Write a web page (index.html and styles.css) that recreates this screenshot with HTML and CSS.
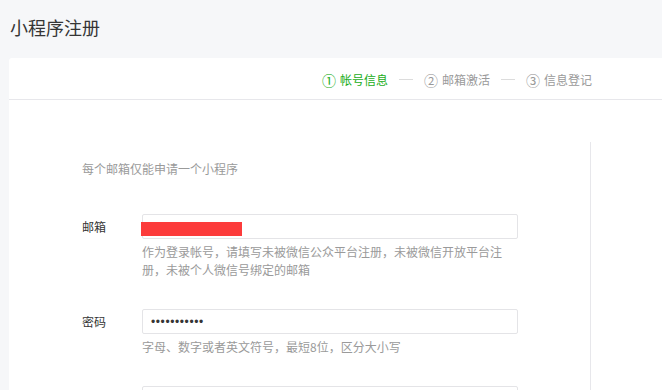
FILE: index.html
```html
<!DOCTYPE html>
<html lang="zh-CN">
<head>
<meta charset="utf-8">
<title>小程序注册</title>
<link rel="stylesheet" href="styles.css">
</head>
<body>
<div class="page">
  <h1 class="page-title">小程序注册</h1>
  <div class="card">
    <div class="card-head">
      <div class="steps">
        <div class="step active"><span class="num">①</span><span>帐号信息</span></div>
        <div class="sep"></div>
        <div class="step"><span class="num">②</span><span>邮箱激活</span></div>
        <div class="sep"></div>
        <div class="step"><span class="num">③</span><span>信息登记</span></div>
      </div>
    </div>
    <div class="card-body">
      <div class="form-col">
        <p class="tips">每个邮箱仅能申请一个小程序</p>
        <div class="form-group">
          <div class="field">
            <label class="label">邮箱</label>
            <div class="input-wrap">
              <div class="input"></div>
              <div class="redact"></div>
            </div>
          </div>
          <p class="help">作为登录帐号，请填写未被微信公众平台注册，未被微信开放平台注册，未被个人微信号绑定的邮箱</p>
        </div>
        <div class="form-group">
          <div class="field">
            <label class="label">密码</label>
            <div class="input-wrap">
              <div class="input"><span class="dots">•••••••••••</span></div>
            </div>
          </div>
          <p class="help">字母、数字或者英文符号，最短8位，区分大小写</p>
        </div>
        <div class="form-group">
          <div class="field">
            <span class="label"></span>
            <div class="input-wrap">
              <div class="input"></div>
            </div>
          </div>
        </div>
      </div>
    </div>
  </div>
</div>
</body>
</html>
```

FILE: styles.css
```css
html, body {
  margin: 0;
  padding: 0;
  background: #f6f7f9;
  overflow: hidden;
  height: 390px;
}
body {
  font-family: "Noto Sans CJK SC", "Noto Sans", sans-serif;
  color: #353535;
}
.page {
  padding: 16px 0 0 0;
}
.page-title {
  margin: 0 0 20px 10px;
  font-size: 18px;
  line-height: 22px;
  font-weight: normal;
  color: #353535;
}
.card {
  margin-left: 9px;
  width: 700px;
  height: 400px;
  background: #fff;
  border-radius: 3px 0 0 0;
}
.card-head {
  height: 41px;
  border-bottom: 1px solid #e7e7eb;
  display: flex;
  align-items: center;
  padding-left: 313px;
  box-sizing: content-box;
}
.steps {
  display: flex;
  align-items: center;
  padding-top: 2px;
  font-size: 12px;
  color: #9a9a9a;
}
.step {
  display: flex;
  align-items: center;
  gap: 4px;
}
.step.active {
  color: #1aad19;
}
.step .num {
  font-size: 14px;
  line-height: 18px;
}
.sep {
  width: 14px;
  height: 1px;
  background: #dcdcdc;
  margin: 0 11px;
}
.card-body {
  padding-top: 42px;
}
.form-col {
  width: 508px;
  padding-left: 73px;
  border-right: 1px solid #e7e7eb;
  padding-top: 18px;
  height: 300px;
}
.tips {
  margin: 0 0 36px 0;
  font-size: 12px;
  line-height: 18px;
  color: #9a9a9a;
}
.form-group {
  margin-bottom: 30px;
}
.field {
  display: flex;
  align-items: center;
}
.label {
  width: 60px;
  font-size: 12px;
  line-height: 18px;
  color: #353535;
}
.input-wrap {
  position: relative;
}
.input {
  width: 376px;
  height: 25px;
  box-sizing: border-box;
  border: 1px solid #e4e4e7;
  border-radius: 2px;
  display: flex;
  align-items: center;
  padding-left: 8px;
}
.redact {
  position: absolute;
  left: -1px;
  top: 8px;
  width: 101px;
  height: 14px;
  background: #fc3b3b;
}
.dots {
  font-family: "Liberation Sans", sans-serif;
  font-size: 12px;
  letter-spacing: 0.6px;
  color: #353535;
  line-height: 1;
}
.help {
  margin: 4px 0 0 60px;
  width: 366px;
  font-size: 12px;
  line-height: 18px;
  color: #9a9a9a;
}
```
